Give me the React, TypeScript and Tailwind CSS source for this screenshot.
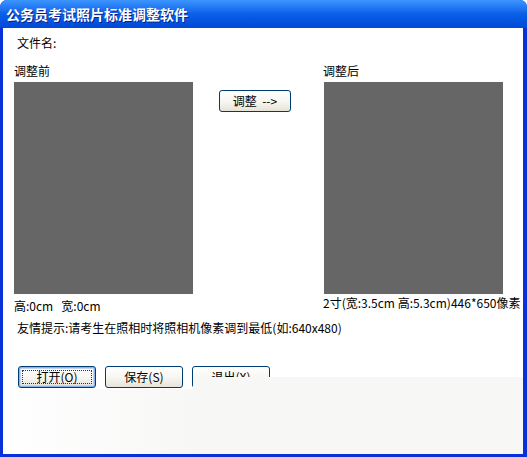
import React from "react";

const cjk = "font-['SimSun','Noto_Sans_CJK_SC',sans-serif]";

function XpButton({
  label,
  focused,
}: {
  label: string;
  focused?: boolean;
}) {
  return (
    <button
      className={`relative h-[22px] w-[78px] rounded-[3px] border border-[#003c74] bg-gradient-to-b from-white via-[#f8f7f3] to-[#e6e3d8] text-[12px] leading-none text-black ${
        focused ? "shadow-[inset_0_0_0_1px_#8cb4ea,inset_0_0_0_2px_#c2d6f3]" : ""
      }`}
    >
      {focused && (
        <span className="pointer-events-none absolute inset-[3px] border border-dotted border-[#333]" />
      )}
      {label}
    </button>
  );
}

export default function App() {
  return (
    <div
      className={`relative flex h-[457px] w-[527px] flex-col overflow-hidden rounded-t-[7px] bg-[#0831d9] ${cjk}`}
    >
      {/* title bar */}
      <div className="flex h-[28px] shrink-0 items-center bg-gradient-to-b from-[#3d95ff] via-[#0a5fe8] to-[#0348d8] pl-[6px]">
        <span className="text-[14px] font-bold leading-none text-white [text-shadow:1px_1px_0_#0a1f8a]">
          公务员考试照片标准调整软件
        </span>
      </div>

      {/* client area */}
      <div className="ml-[3px] mr-[4px] mb-[3px] flex flex-1 flex-col bg-white pl-[11px] text-[12px] leading-[14px] text-black">
        <div className="mt-[8px] pl-[3px]">文件名:</div>

        <div className="mt-[14px] flex">
          {/* before column */}
          <div className="flex w-[179px] flex-col">
            <div>调整前</div>
            <div className="mt-[4px] h-[212px] w-[179px] bg-[#666666]" />
            <div className="mt-[5px] whitespace-nowrap">
              高:0cm&nbsp;&nbsp;&nbsp;宽:0cm
            </div>
          </div>

          {/* middle */}
          <div className="ml-[26px] pt-[26px]">
            <button className="h-[22px] w-[72px] rounded-[3px] border border-[#003c74] bg-gradient-to-b from-white via-[#f8f7f3] to-[#e6e3d8] text-[12px] leading-none text-black">
              调整&nbsp;&nbsp;--&gt;
            </button>
          </div>

          {/* after column */}
          <div className="ml-[32px] flex flex-col">
            <div>调整后</div>
            <div className="ml-[1px] mt-[4px] h-[212px] w-[179px] bg-[#666666]" />
            <div className="mt-[2px] whitespace-nowrap">
              2寸(宽:3.5cm 高:5.3cm)446*650像素
            </div>
          </div>
        </div>

        <div className="mt-[8px] pl-[3px] whitespace-nowrap">
          友情提示:请考生在照相时将照相机像素调到最低(如:640x480)
        </div>

        <div className="mt-[31px] flex gap-[9px] pl-[4px]">
          <XpButton label="打开(O)" focused />
          <XpButton label="保存(S)" />
          <XpButton label="退出(X)" />
        </div>
      </div>

      {/* faded overlay over the lower part */}
      <div className="pointer-events-none absolute bottom-[3px] left-[193px] right-[4px] top-[377px] bg-[#f7f7f6]" />
      <div className="pointer-events-none absolute bottom-[3px] left-[3px] top-[389px] w-[190px] bg-gradient-to-r from-white to-[#f7f7f6]" />
    </div>
  );
}
